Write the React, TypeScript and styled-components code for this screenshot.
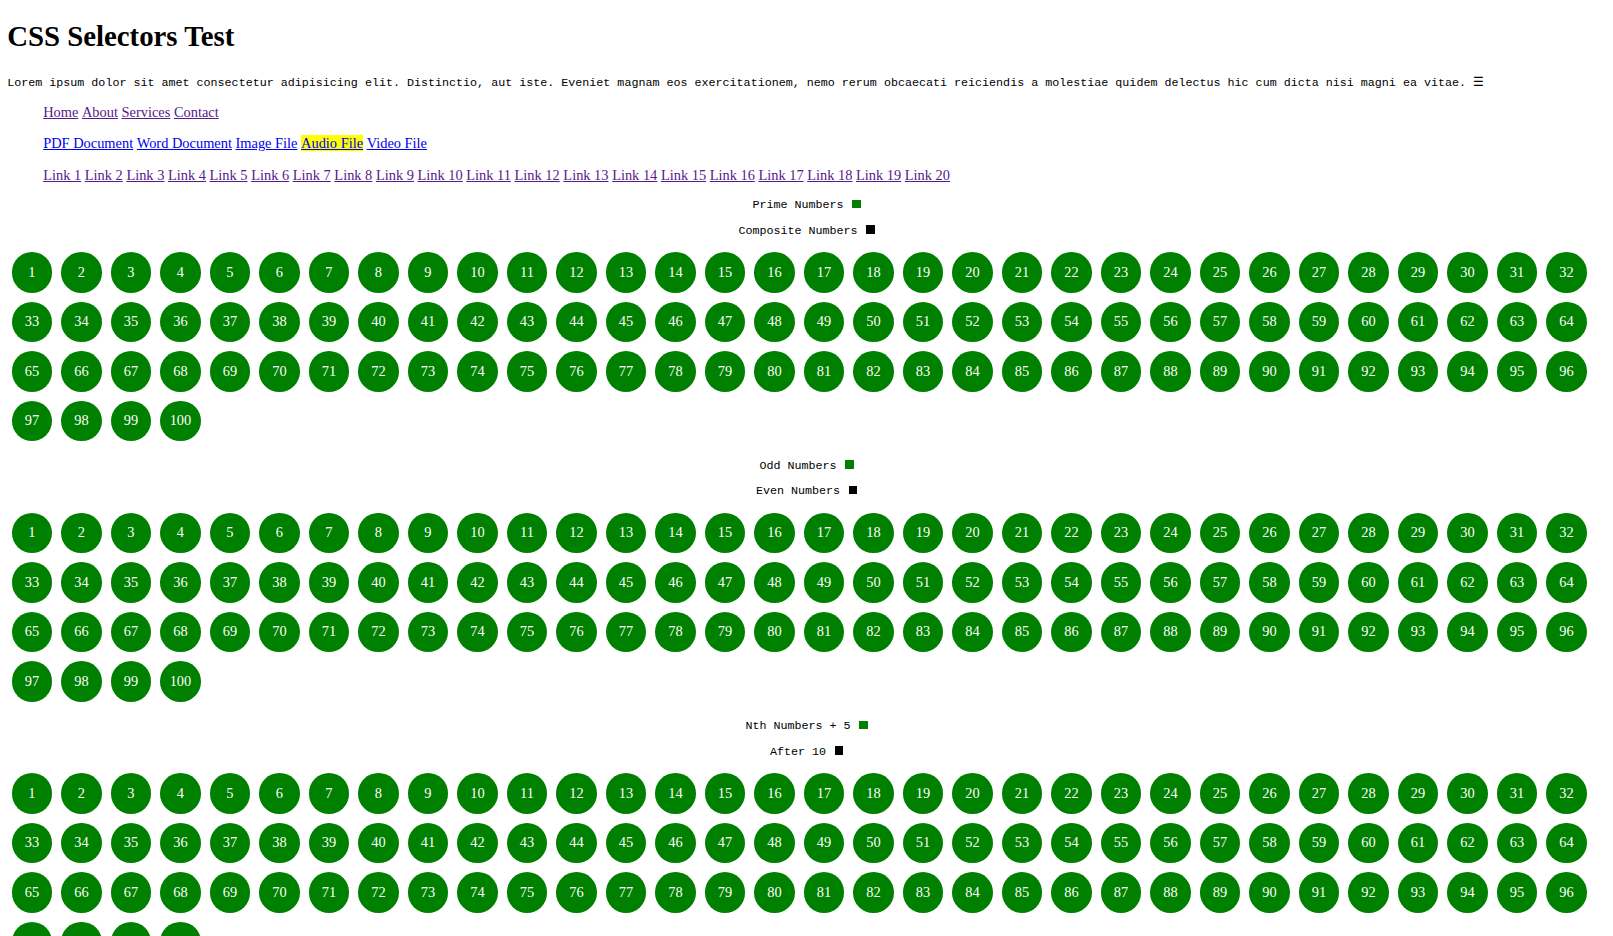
import React from "react";
import styled, { createGlobalStyle } from "styled-components";

const SERIF = `"Liberation Serif", "Times New Roman", Times, serif`;
const MONO = `"Liberation Mono", "Courier New", Courier, monospace`;

const GlobalStyle = createGlobalStyle`
  html { scrollbar-width: none; }
  html::-webkit-scrollbar, body::-webkit-scrollbar { display: none; }
  body {
    margin: 7.2px;
    font-family: ${SERIF};
    font-size: 14.4px;
    color: #000;
    background: #fff;
  }
`;

const Title = styled.h1`
  font-size: 28.8px;
  font-weight: bold;
  margin: 13.1px 0 19.3px;
`;

const Intro = styled.p`
  margin: 14.4px 0;
  font-size: 14.4px;
`;

const Code = styled.span`
  font-family: ${MONO};
  font-size: 11.7px;
`;

const NavList = styled.ul`
  list-style: none;
  margin: 14.4px 0;
  padding-left: 36px;
`;

const NavItem = styled.li`
  display: inline;
`;

const NavLink = styled.a<{ $visited?: boolean; $highlight?: boolean }>`
  color: ${(p) => (p.$visited ? "#551a8b" : "#0000ee")};
  text-decoration: underline;
  background: ${(p) => (p.$highlight ? "#ffff00" : "transparent")};
  cursor: pointer;
`;

const Legend = styled.p`
  font-family: ${MONO};
  font-size: 11.7px;
  margin: 11.7px 0;
  text-align: center;
`;

const Swatch = styled.span<{ $color: string }>`
  display: inline-block;
  width: 8.5px;
  height: 8.5px;
  margin-left: 1.5px;
  background: ${(p) => p.$color};
`;

const NumberGrid = styled.div`
  display: flex;
  flex-wrap: wrap;
  margin: -2px 0 0;
  padding-bottom: 1.5px;
`;

const NumberCircle = styled.div`
  width: 40.5px;
  height: 40.5px;
  margin: 4.5px;
  border-radius: 50%;
  background: #008000;
  color: #fff;
  font-family: ${SERIF};
  font-size: 14.4px;
  display: flex;
  align-items: center;
  justify-content: center;
`;

const mainLinks = ["Home", "About", "Services", "Contact"];
const fileLinks = ["PDF Document", "Word Document", "Image File", "Audio File", "Video File"];
const numberedLinks = Array.from({ length: 20 }, (_, i) => `Link ${i + 1}`);
const numbers = Array.from({ length: 100 }, (_, i) => i + 1);

const sections = [
  { first: "Prime Numbers", firstColor: "#008000", second: "Composite Numbers", secondColor: "#000" },
  { first: "Odd Numbers", firstColor: "#008000", second: "Even Numbers", secondColor: "#000" },
  { first: "Nth Numbers + 5", firstColor: "#008000", second: "After 10", secondColor: "#000" },
];

export default function App() {
  return (
    <>
      <GlobalStyle />
      <Title>CSS Selectors Test</Title>
      <Intro>
        <Code>
          Lorem ipsum dolor sit amet consectetur adipisicing elit. Distinctio, aut iste. Eveniet magnam eos
          exercitationem, nemo rerum obcaecati reiciendis a molestiae quidem delectus hic cum dicta nisi magni ea
          vitae. ☰
        </Code>
      </Intro>
      <NavList>
        {mainLinks.map((l, i) => (
          <React.Fragment key={l}>
            {i > 0 && " "}
            <NavItem>
              <NavLink $visited>{l}</NavLink>
            </NavItem>
          </React.Fragment>
        ))}
      </NavList>
      <NavList>
        {fileLinks.map((l, i) => (
          <React.Fragment key={l}>
            {i > 0 && " "}
            <NavItem>
              <NavLink $highlight={l === "Audio File"}>{l}</NavLink>
            </NavItem>
          </React.Fragment>
        ))}
      </NavList>
      <NavList>
        {numberedLinks.map((l, i) => (
          <React.Fragment key={l}>
            {i > 0 && " "}
            <NavItem>
              <NavLink $visited>{l}</NavLink>
            </NavItem>
          </React.Fragment>
        ))}
      </NavList>
      {sections.map((s) => (
        <section key={s.first}>
          <Legend>
            {s.first} <Swatch $color={s.firstColor} />
          </Legend>
          <Legend>
            {s.second} <Swatch $color={s.secondColor} />
          </Legend>
          <NumberGrid>
            {numbers.map((n) => (
              <NumberCircle key={n}>{n}</NumberCircle>
            ))}
          </NumberGrid>
        </section>
      ))}
    </>
  );
}
